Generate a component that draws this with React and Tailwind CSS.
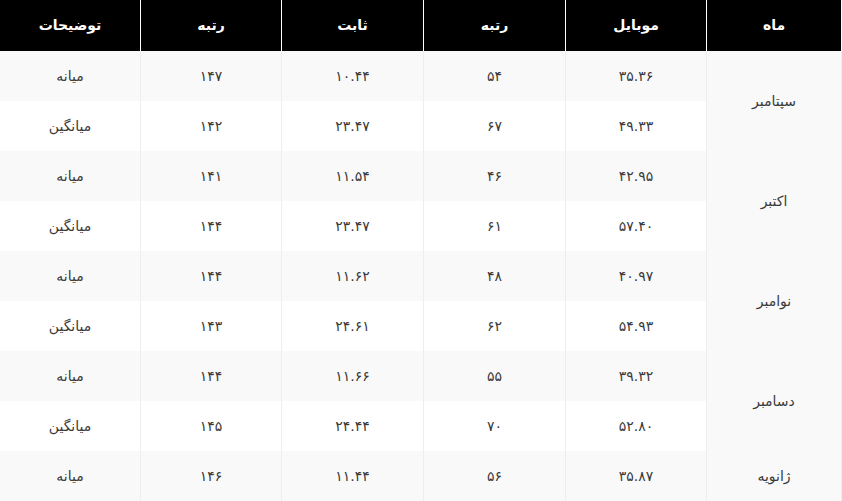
const rows = [
  ["سپتامبر", "۳۵.۳۶", "۵۴", "۱۰.۴۴", "۱۴۷", "میانه"],
  [null, "۴۹.۳۳", "۶۷", "۲۳.۴۷", "۱۴۲", "میانگین"],
  ["اکتبر", "۴۲.۹۵", "۴۶", "۱۱.۵۴", "۱۴۱", "میانه"],
  [null, "۵۷.۴۰", "۶۱", "۲۳.۴۷", "۱۴۴", "میانگین"],
  ["نوامبر", "۴۰.۹۷", "۴۸", "۱۱.۶۲", "۱۴۴", "میانه"],
  [null, "۵۴.۹۳", "۶۲", "۲۴.۶۱", "۱۴۳", "میانگین"],
  ["دسامبر", "۳۹.۳۲", "۵۵", "۱۱.۶۶", "۱۴۴", "میانه"],
  [null, "۵۲.۸۰", "۷۰", "۲۴.۴۴", "۱۴۵", "میانگین"],
  ["ژانویه", "۳۵.۸۷", "۵۶", "۱۱.۴۴", "۱۴۶", "میانه", 1],
];

const heads = ["ماه", "موبایل", "رتبه", "ثابت", "رتبه", "توضیحات"];
const widths = ["w-[135px]", "w-[141px]", "w-[142px]", "w-[142px]", "w-[141px]", "w-[141px]"];

export default function App() {
  return (
    <div dir="rtl" className="w-[842px] h-[501px] overflow-hidden bg-white" style={{ fontFamily: '"DejaVu Sans", "Noto Sans", sans-serif' }}>
      <table className="w-full table-fixed border-collapse text-center">
        <colgroup>
          {widths.map((w, i) => (
            <col key={i} className={w} />
          ))}
        </colgroup>
        <thead>
          <tr className="bg-black text-white">
            {heads.map((h, i) => (
              <th key={i} className="h-[51px] border-x border-white text-[14px] font-bold">{h}</th>
            ))}
          </tr>
        </thead>
        <tbody className="text-[14px] text-[#3a3a3a]">
          {rows.map((r, i) => (
            <tr key={i} className={i % 2 === 0 ? "bg-[#f9f9f9]" : "bg-white"}>
              {r[0] !== null && (
                <td rowSpan={r[6] ? 1 : 2} className="bg-[#f9f9f9] border-x border-[#eeeeee]">{r[0]}</td>
              )}
              {r.slice(1, 6).map((c, j) => (
                <td key={j} className="h-[50px] border-x border-[#eeeeee]">{c}</td>
              ))}
            </tr>
          ))}
        </tbody>
      </table>
    </div>
  );
}
